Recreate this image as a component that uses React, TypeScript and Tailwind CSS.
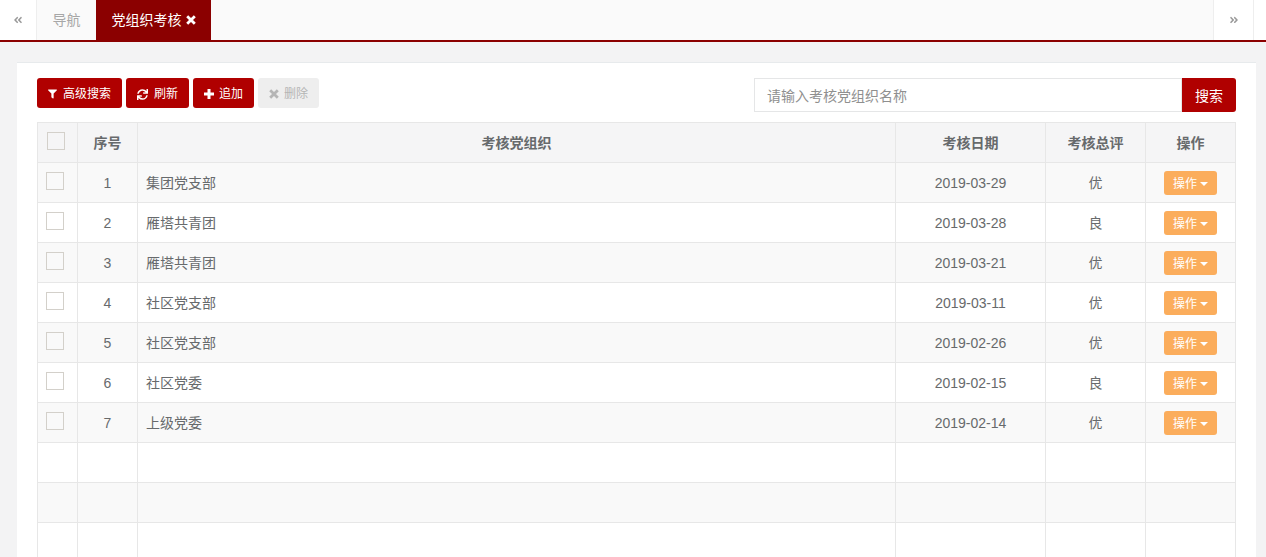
import { FaAngleDoubleLeft, FaAngleDoubleRight, FaFilter, FaSync } from "react-icons/fa";

const rows = [
  { id: 1, org: "集团党支部", date: "2019-03-29", grade: "优" },
  { id: 2, org: "雁塔共青团", date: "2019-03-28", grade: "良" },
  { id: 3, org: "雁塔共青团", date: "2019-03-21", grade: "优" },
  { id: 4, org: "社区党支部", date: "2019-03-11", grade: "优" },
  { id: 5, org: "社区党支部", date: "2019-02-26", grade: "优" },
  { id: 6, org: "社区党委", date: "2019-02-15", grade: "良" },
  { id: 7, org: "上级党委", date: "2019-02-14", grade: "优" },
];

// FontAwesome 4 style glyphs, heavier than the fa5 ones
const TimesIcon = () => (
  <svg viewBox="0 0 10 10" className="h-[10px] w-[10px]" fill="none" stroke="currentColor" strokeWidth="2.8">
    <path d="M1.2 1.2 8.8 8.8M8.8 1.2 1.2 8.8" />
  </svg>
);

const PlusIcon = () => (
  <svg viewBox="0 0 10 10" className="h-[10px] w-[10px]" fill="none" stroke="currentColor" strokeWidth="3">
    <path d="M5 0V10M0 5H10" />
  </svg>
);

const Checkbox = () => <span className="-mt-[4px] block h-[18px] w-[18px] border border-[#d3d0ca]" />;

const Toolbar = () => (
  <div className="flex h-[44px] items-start justify-between">
    <div className="flex gap-1">
      <button className="flex h-[30px] w-[85px] items-center justify-center gap-[6px] rounded-[3px] bg-[#b00000] pt-[2px] text-xs text-white">
        <FaFilter className="h-[10px] w-[9px]" />
        高级搜索
      </button>
      <button className="flex h-[30px] w-[63px] items-center justify-center gap-[6px] rounded-[3px] bg-[#b00000] pt-[2px] text-xs text-white">
        <FaSync className="h-[11px] w-[11px]" />
        刷新
      </button>
      <button className="flex h-[30px] w-[61px] items-center justify-center gap-[5px] rounded-[3px] bg-[#b00000] pt-[2px] text-xs text-white">
        <PlusIcon />
        追加
      </button>
      <button className="flex h-[30px] w-[61px] items-center justify-center gap-[5px] rounded-[3px] bg-[#eeeeee] pt-[2px] text-xs text-[#b5b5b5]">
        <TimesIcon />
        删除
      </button>
    </div>
    <div className="flex h-[34px] w-[482px]">
      <div className="flex flex-1 items-center border border-[#e5e6e7] px-3 pt-[2px] text-sm text-[#8f8f8f]">
        请输入考核党组织名称
      </div>
      <button className="h-[34px] w-[54px] rounded-r-[3px] bg-[#b00000] pt-[2px] text-sm text-white">搜索</button>
    </div>
  </div>
);

const DataTable = () => (
  <table className="w-[1198px] table-fixed border-collapse text-sm text-[#676a6c]">
    <colgroup>
      <col className="w-[40px]" />
      <col className="w-[60px]" />
      <col className="w-[758px]" />
      <col className="w-[150px]" />
      <col className="w-[100px]" />
      <col className="w-[90px]" />
    </colgroup>
    <thead>
      <tr className="h-[40px] bg-[#f5f5f6] font-bold">
        <th className="border border-[#e7e7e7] pl-[9px]"><Checkbox /></th>
        <th className="border border-[#e7e7e7]">序号</th>
        <th className="border border-[#e7e7e7]">考核党组织</th>
        <th className="border border-[#e7e7e7]">考核日期</th>
        <th className="border border-[#e7e7e7]">考核总评</th>
        <th className="border border-[#e7e7e7]">操作</th>
      </tr>
    </thead>
    <tbody>
      {rows.map((r) => (
        <tr key={r.id} className={r.id % 2 ? "h-[40px] bg-[#f9f9f9]" : "h-[40px] bg-white"}>
          <td className="border border-[#e7e7e7] pl-[8px]"><Checkbox /></td>
          <td className="border border-[#e7e7e7] text-center">{r.id}</td>
          <td className="border border-[#e7e7e7] px-2">{r.org}</td>
          <td className="border border-[#e7e7e7] text-center">{r.date}</td>
          <td className="border border-[#e7e7e7] text-center">{r.grade}</td>
          <td className="border border-[#e7e7e7]">
            <button className="mx-auto flex h-[24px] w-[53px] items-center justify-center gap-[3px] rounded-[3px] bg-[#fbad5c] pt-[2px] text-xs text-white">
              操作
              <span className="mt-[1px] border-x-[4px] border-t-[4px] border-x-transparent border-t-white" />
            </button>
          </td>
        </tr>
      ))}
      {[0, 1, 2].map((i) => (
        <tr key={i} className={i === 1 ? "h-[40px] bg-[#f9f9f9]" : "h-[40px] bg-white"}>
          {[0, 1, 2, 3, 4, 5].map((c) => (
            <td key={c} className="border border-[#e7e7e7]" />
          ))}
        </tr>
      ))}
    </tbody>
  </table>
);

export default function App() {
  return (
    <div className="h-[557px] overflow-hidden bg-[#f3f3f4] font-['Liberation_Sans','Noto_Sans_CJK_SC',sans-serif]">
      <nav className="flex h-[42px] border-b-2 border-[#8b0000] bg-[#fafafa] text-sm">
        <div className="flex w-[37px] items-center justify-center border-r border-[#eeeeee] bg-white pr-[1px] text-[#999999]">
          <FaAngleDoubleLeft className="h-[10px] w-[10px]" />
        </div>
        <div className="flex w-[59px] items-center justify-center text-[#a7a7a7]">导航</div>
        <div className="flex w-[115px] items-center justify-center gap-[4px] bg-[#8b0000] text-white">
          党组织考核
          <TimesIcon />
        </div>
        <div className="flex-1" />
        <div className="flex w-[41px] items-center justify-center border-x border-[#eeeeee] bg-white text-[#999999]">
          <FaAngleDoubleRight className="h-[10px] w-[10px]" />
        </div>
        <div className="w-[12px] bg-white" />
      </nav>
      <main className="ml-[17px] mr-[10px] mt-[20px] border-t border-[#e7eaec] bg-white px-[20px] pt-[15px]">
        <Toolbar />
        <DataTable />
      </main>
    </div>
  );
}
